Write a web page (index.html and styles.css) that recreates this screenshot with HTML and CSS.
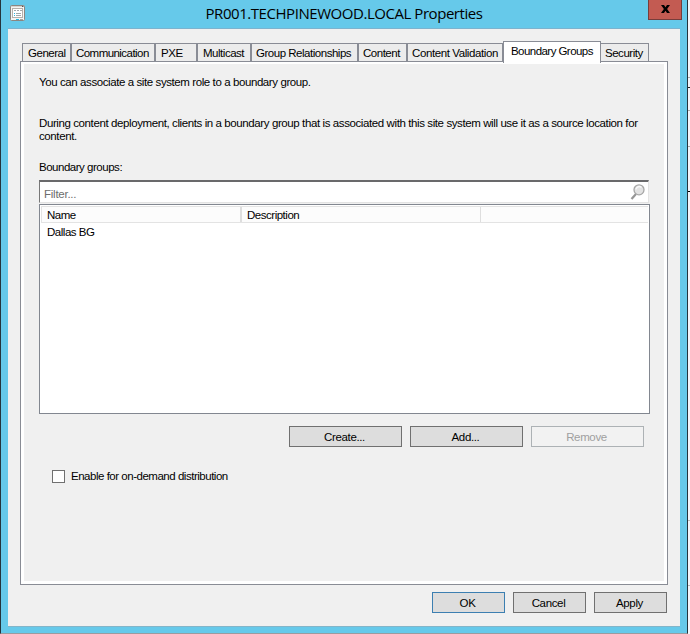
FILE: index.html
```html
<!DOCTYPE html>
<html lang="en">
<head>
<meta charset="utf-8">
<title>PR001.TECHPINEWOOD.LOCAL Properties</title>
<link rel="stylesheet" href="styles.css">
</head>
<body>
<div class="desktop">
<main class="window">
  <header class="titlebar">
    <svg class="app-icon" width="16" height="16" viewBox="0 0 16 16">
      <rect x=".5" y=".5" width="14" height="15" rx="1" fill="#f4f4f2" stroke="#8b8681"/>
      <path d="M1 1.5h11" stroke="#d8d4d0"/>
      <path d="M12 1.5h1.500" stroke="#55504c"/>
      <rect x="2.500" y="3.500" width="10" height="9" fill="#fff" stroke="#b5b0ab"/>
      <path d="M4 5.500h2M7 5.500h2M10 5.500h2M6 8.500h5M6 10.500h5" stroke="#a3a8aa"/>
      <path d="M4 8.500h1M4 10.500h1M6 14.500h3" stroke="#29b6de"/>
      <path d="M10 14.500h3" stroke="#aaa5a0"/>
    </svg>
    <h1 class="title">PR001.TECHPINEWOOD.LOCAL Properties</h1>
    <button class="close" aria-label="Close"><svg width="9" height="8" viewBox="0 0 9 8"><path d="M0 0h3l1.500 2.300L6 0h3L6.100 4 9 8H6L4.500 5.700 3 8H0l2.900-4z" fill="#000"/></svg></button>
  </header>
  <section class="client">
    <nav class="tabs">
      <button class="tab t-general"><span>General</span></button>
      <button class="tab t-comm"><span>Communication</span></button>
      <button class="tab t-pxe"><span>PXE</span></button>
      <button class="tab t-multi"><span>Multicast</span></button>
      <button class="tab t-rel"><span>Group Relationships</span></button>
      <button class="tab t-content"><span>Content</span></button>
      <button class="tab t-valid"><span>Content Validation</span></button>
      <button class="tab active"><span>Boundary Groups</span></button>
      <button class="tab t-sec"><span>Security</span></button>
    </nav>
    <div class="pane">
      <p class="intro"><span>You can associate a site system role to a boundary group.</span></p>
      <p class="detail"><span class="line1">During content deployment, clients in a boundary group that is associated with this site system will use it as a source location for</span><br><span>content.</span></p>
      <p class="list-label"><span>Boundary groups:</span></p>
      <div class="filter"><span>Filter...</span>
        <svg width="16" height="17" viewBox="0 0 16 17"><path d="M6 11L1.500 16" stroke="#969696" stroke-width="2.200"/><circle cx="9" cy="6.800" r="5" fill="#e2e2e2" stroke="#a6a6a6" stroke-width="1.300"/><path d="M6 6.300A3.200 3.200 0 0 1 11.500 4.600" fill="none" stroke="#f8f8f8" stroke-width="1.500"/></svg>
      </div>
      <div class="list">
        <div class="head"><div class="col name"><span>Name</span></div><div class="col desc"><span>Description</span></div></div>
        <div class="row"><span>Dallas BG</span></div>
      </div>
      <div class="actions">
        <button class="btn"><span>Create...</span></button>
        <button class="btn"><span>Add...</span></button>
        <button class="btn disabled" disabled><span>Remove</span></button>
      </div>
      <div class="option"><i class="check"></i><span>Enable for on-demand distribution</span></div>
    </div>
    <footer class="footer">
      <button class="btn ok"><span>OK</span></button>
      <button class="btn"><span>Cancel</span></button>
      <button class="btn"><span>Apply</span></button>
    </footer>
  </section>
</main>
<aside class="behind"><i class="b1"></i><i class="b2"></i><i class="b3"></i><i class="b4"></i><i class="b5"></i><i class="b6"></i><i class="b7"></i></aside>
</div>
</body>
</html>
```
FILE: styles.css
```css
* { box-sizing: border-box; }
body { margin: 0; width: 690px; height: 634px; overflow: hidden; background: #fff; color: #000; font: 11.5px/14px "Liberation Sans", Arial, sans-serif; letter-spacing: -.48px; }
p, h1 { margin: 0; font-weight: normal; }
button { font: inherit; letter-spacing: inherit; color: inherit; padding: 0; margin: 0; border-radius: 0; white-space: nowrap; }
.desktop { display: flex; height: 634px; }
.window { width: 688px; height: 634px; background: #66c9ea; border: solid #25343c; border-width: 0 1px; border-bottom: 1px solid #9b9b9f; padding: 0 7px; }
.titlebar { height: 28px; display: flex; align-items: flex-start; }
.app-icon { margin: 5px 0 0 2px; flex: none; }
.title { flex: 1; margin: 3px 0 0; text-align: center; font: 15px/20px "Open Sans", sans-serif; letter-spacing: -.45px; padding-left: 14px; }
.close { width: 34px; height: 20px; margin-right: -2px; background: #c35b52; border: 1px solid #773d3b; border-top: 0; display: flex; align-items: center; justify-content: center; padding-bottom: 2px; }
.client { width: 672px; height: 599px; background: #f0f0f0; border-top: 1px solid #7db3ce; border-bottom: 1px solid #83b5c9; padding: 12px 12px 0; }
.tabs { display: flex; align-items: flex-end; height: 20px; padding-left: 2px; }
.tab { height: 18px; background: #ececec; border: 1px solid #898c95; border-bottom: 0; text-align: left; padding-left: 5px; }
.tab span { display: block; line-height: 19px; }
.t-general { width: 49px; }
.t-comm { width: 84px; padding-left: 4px; letter-spacing: -.55px; }
.t-pxe { width: 42px; }
.t-multi { width: 54px; }
.t-rel { width: 107px; padding-left: 4px; }
.t-content { width: 49px; padding-left: 4px; }
.t-valid { width: 96px; padding-left: 4px; letter-spacing: -.4px; }
.active { width: 98px; height: 22px; background: #fff; margin-bottom: -2px; padding-left: 7px; position: relative; letter-spacing: -.55px; }
.active span { line-height: 19px; height: 21px; }
.t-sec { width: 48px; border-left: 0; padding-left: 4px; }
.pane { width: 648px; height: 524px; border: 1px solid #898c95; padding: 13px 14px 0 15px; background: #f0f0f0; box-shadow: inset 3px 2px #fff, inset -3px -3px #fff; }
.intro { height: 42px; padding-left: 3px; letter-spacing: -.41px; }
.detail { height: 43px; line-height: 13px; padding-left: 3px; white-space: nowrap; letter-spacing: -.4px; }
.list-label { height: 20px; padding-left: 3px; }
.filter { margin-left: 3px; width: 610px; height: 23px; background: #fff; border: solid; border-width: 2px 1px 1px; border-color: #69696b #e3e3e3 #e3e3e3 #777; display: flex; justify-content: space-between; padding: 5px 2px 0 4px; color: #6d6d6d; letter-spacing: -.25px; }
.filter svg { margin-top: -4px; }
.list { margin: 1px 0 0 3px; width: 611px; height: 210px; background: #fff; border: 1px solid #828790; padding: 1px; }
.head { display: flex; height: 17px; background: #fcfcfc; border: 1px solid #e3e3e3; border-right: 0; }
.col { line-height: 17px; padding-left: 5px; border-right: 1px solid #dedede; }
.name { width: 200px; border-right-width: 2px; }
.desc { width: 239px; }
.row { padding: 2px 0 0 6px; line-height: 15px; }
.actions { display: flex; gap: 8px; margin: 12px 0 0 253px; }
.btn { height: 21px; width: 113px; background: #ddd; border: 1px solid #707070; text-align: center; letter-spacing: -.35px; }
.btn span { display: block; height: 19px; line-height: 20px; padding-right: 2px; }
.disabled { background: #f2f2f2; border-color: #adb2b5; color: #a0a0a0; }
.option { display: flex; align-items: center; gap: 6px; margin: 22px 0 0 16px; }
.check { width: 13px; height: 13px; background: #fff; border: 1px solid #707070; }
.footer { display: flex; justify-content: flex-end; gap: 8px; padding: 7px 1px 0 0; }
.footer .btn { width: 73px; }
.footer .ok { border-color: #3c7fb1; }
.behind { width: 2px; height: 634px; background: #f4f5fa; display: flex; flex-direction: column; }
.behind i { height: 1px; flex: none; }
.b1 { margin-top: 77px; background: #aaa; }
.b2 { margin-top: 9px; background: #222; }
.b3 { margin-top: 22px; background: #aaa; }
.b4 { margin-top: 35px; background: #aaa; }
.b5 { margin-top: 44px; background: #000; }
.b6 { margin-top: 328px; background: #bbb; }
.b7 { margin-top: 64px; background: #bbb; }
```
